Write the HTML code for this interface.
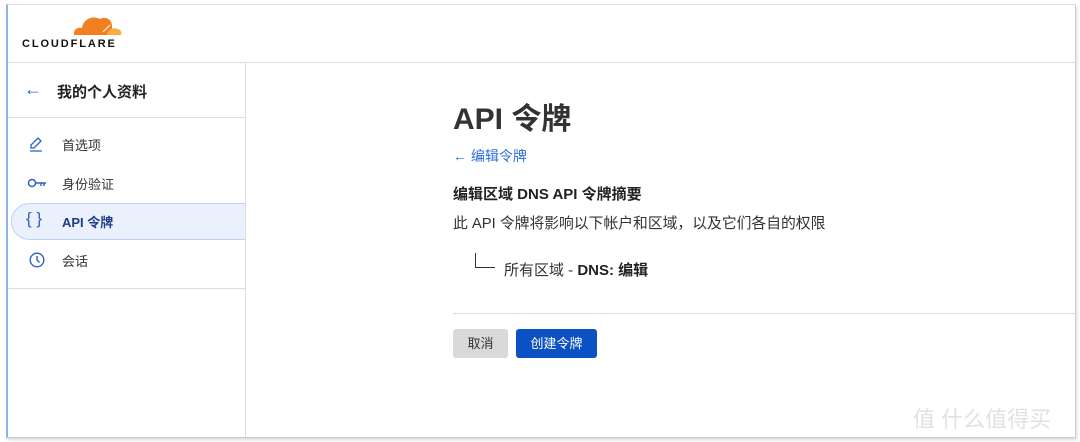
<!DOCTYPE html>
<html><head><meta charset="utf-8"><style>
*{margin:0;padding:0;box-sizing:border-box}
body{width:1080px;height:442px;background:#fff;font-family:"Liberation Sans","Noto Sans CJK SC",sans-serif;color:#222;position:relative;overflow:hidden}
.frame{position:absolute;left:6px;top:4px;width:1070px;height:434px;border-left:2px solid #8fb4e6;border-right:1px solid #ccc;border-bottom:1px solid #ccc;border-top:1px solid #e0e0e0;box-shadow:1px 2px 3px rgba(0,0,0,.15)}
.hdr{position:absolute;left:8px;top:5px;right:5px;height:58px;border-bottom:1px solid #ddd}
.side{position:absolute;left:8px;top:63px;width:238px;height:374px;border-right:1px solid #ddd;overflow:hidden}
.t{position:absolute;white-space:nowrap}
.item{position:absolute;left:0;width:238px;height:38px;font-size:13px;color:#333}
.item span{position:absolute;left:54px;top:10px}
.ic{position:absolute;left:20px;top:11px;color:#2b5fc7}
</style></head><body>
<div class="frame"></div>
<div class="hdr">
<svg style="position:absolute;left:64px;top:9px" width="50" height="22" viewBox="0 0 50 22"><path d="M2 21 C1 16 5 13 10 14 C11 5 21 1 28 5 C33 2 40 5 40 12 L40 21 Z" fill="#f38020"/><path d="M35 21 C36 15 41 13 46 15 C49 16 50 19 49 21 Z" fill="#faae40"/><path d="M31 18 L38 11" stroke="#fff" stroke-width="1"/></svg>
<div class="t" style="left:14px;top:33px;font-size:11px;font-weight:bold;letter-spacing:1.9px;color:#111">CLOUDFLARE</div>
</div>
<div class="side">
<div class="t" style="left:16px;top:16px;font-size:18px;color:#2b5fc7">←</div>
<div class="t" style="left:49px;top:18px;font-size:15px;font-weight:bold;color:#222">我的个人资料</div>
<div style="position:absolute;left:0;top:54px;width:238px;border-top:1px solid #ddd"></div>
<div class="item" style="top:62px"><svg class="ic" width="16" height="16" viewBox="0 0 16 16"><path d="M3 12 L3 9 L10 2 L13 5 L6 12 Z M2 15 H14" fill="none" stroke="#2b5fc7" stroke-width="1.3"/></svg><span>首选项</span></div>
<div class="item" style="top:101px"><svg class="ic" width="20" height="14" viewBox="0 0 20 14" style="left:19px;top:13px"><circle cx="5" cy="6" r="3.5" fill="none" stroke="#2b5fc7" stroke-width="1.4"/><path d="M8.5 6 H19 M14 6 V9 M17 6 V9" stroke="#2b5fc7" stroke-width="1.4"/></svg><span>身份验证</span></div>
<div style="position:absolute;left:3px;top:140px;width:260px;height:37px;background:#eaf1fd;border:1px solid #bcd2f5;border-radius:19px"></div>
<div class="item" style="top:139px"><div class="t" style="left:18px;top:7px;font-size:17px;color:#2b5fc7">{ }</div><span style="font-weight:bold;color:#1d3e86">API 令牌</span></div>
<div class="item" style="top:178px"><svg class="ic" width="16" height="16" viewBox="0 0 16 16" style="left:21px"><circle cx="8" cy="8" r="6.8" fill="none" stroke="#2b5fc7" stroke-width="1.4"/><path d="M8 4 V8 L10.5 10.5" fill="none" stroke="#2b5fc7" stroke-width="1.4"/></svg><span>会话</span></div>
<div style="position:absolute;left:0;top:225px;width:238px;border-top:1px solid #ddd"></div>
</div>
<div class="t" style="left:453px;top:94px;font-size:30px;font-weight:bold;color:#333">API 令牌</div>
<div class="t" style="left:453px;top:146px;font-size:14px;color:#2f6fd8">← 编辑令牌</div>
<div class="t" style="left:453px;top:183px;font-size:15px;font-weight:bold;color:#222">编辑区域 DNS API 令牌摘要</div>
<div class="t" style="left:453px;top:212px;font-size:14.8px;color:#333">此 API 令牌将影响以下帐户和区域，以及它们各自的权限</div>
<div style="position:absolute;left:475px;top:253px;width:20px;height:15px;border-left:1px solid #333;border-bottom:1px solid #333"></div>
<div class="t" style="left:504px;top:259px;font-size:15px;color:#333">所有区域 - <b style="color:#222">DNS: 编辑</b></div>
<div style="position:absolute;left:453px;top:313px;width:622px;border-top:1px solid #ddd"></div>
<div class="t" style="left:453px;top:329px;width:55px;height:29px;background:#d9d9d9;border-radius:3px;font-size:13px;line-height:29px;text-align:center;color:#333">取消</div>
<div class="t" style="left:516px;top:329px;width:81px;height:29px;background:#0a51c4;border-radius:3px;font-size:13px;line-height:29px;text-align:center;color:#fff">创建令牌</div>
<div class="t" style="left:913px;top:402px;font-size:22px;color:#e2e2e2">值 什么值得买</div>
</body></html>
